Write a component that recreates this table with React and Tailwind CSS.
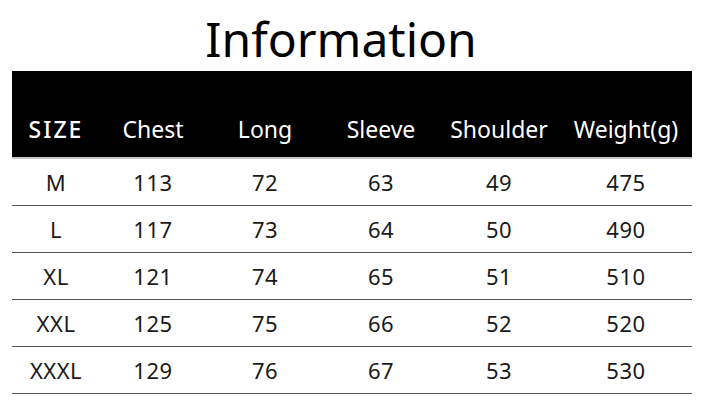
import React from 'react'

const cols = ['SIZE', 'Chest', 'Long', 'Sleeve', 'Shoulder', 'Weight(g)']

const rows = [
  ['M', '113', '72', '63', '49', '475'],
  ['L', '117', '73', '64', '50', '490'],
  ['XL', '121', '74', '65', '51', '510'],
  ['XXL', '125', '75', '66', '52', '520'],
  ['XXXL', '129', '76', '67', '53', '530'],
]

const grid = 'grid grid-cols-[88px_106px_118px_114px_122px_132px]'

export default function App() {
  return (
    <div className="w-[704px] h-[408px] bg-white font-['Noto_Sans',sans-serif] text-black">
      <h1 className="h-[71px] pt-[10px] pr-[22px] text-center text-[48px] leading-[58px] font-normal">Information</h1>
      <div className="mx-[12px] w-[680px]">
        <div className={`${grid} h-[86px] bg-black text-white items-end pb-[13px]`}>
          {cols.map((c, i) => (
            <div key={c} className={`text-center text-[23px] leading-[30px] ${i === 0 ? 'tracking-[2px] font-medium' : ''}`}>
              {c}
            </div>
          ))}
        </div>
        <div className="h-[2px] bg-[#c8c8c8]" />
        {rows.map((r) => (
          <div key={r[0]} className={`${grid} h-[47px] border-b-[1.5px] border-[#555] items-center text-[22px] tracking-[0.5px] text-[#1a1a1a]`}>
            {r.map((v, i) => (
              <div key={i} className="text-center">{v}</div>
            ))}
          </div>
        ))}
      </div>
    </div>
  )
}
